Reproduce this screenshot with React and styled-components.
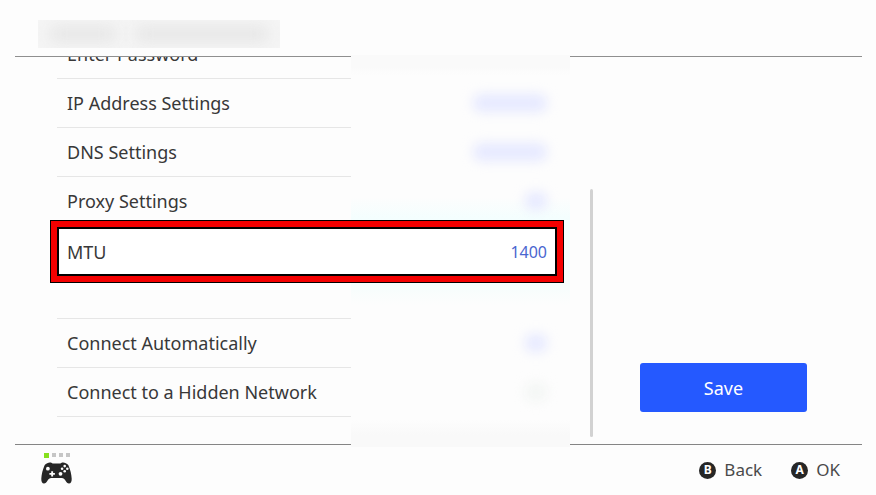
import styled, { createGlobalStyle, css } from "styled-components";

const GlobalStyle = createGlobalStyle`
  * {
    box-sizing: border-box;
  }

  body {
    margin: 0;
    background: #fdfdfd;
    color: #383838;
    font-family: "Noto Sans", "Open Sans", sans-serif;
    font-size: 18px;
    line-height: 24px;
  }

  button {
    border: 0;
    padding: 0;
    background: none;
    color: inherit;
    font: inherit;
    cursor: pointer;
  }
`;

const Page = styled.div`
  display: grid;
  grid-template-rows: 57px 1fr 51px;
  height: 100vh;
  overflow: hidden;
`;

const Header = styled.header`
  margin: 0 14px 0 15px;
  padding: 20px 23px 0;
  border-bottom: 1px solid #8f8f8f;
`;

const HiddenTitle = styled.div`
  display: flex;
  align-items: center;
  gap: 20px;
  width: 242px;
  height: 28px;
  padding: 0 12px;
  background: #f5f5f5;
  overflow: hidden;
`;

const TitleSmudge = styled.span`
  flex: ${(props) => props.$grow};
  height: 14px;
  background: #e4e4e4;
  filter: blur(8px);
`;

const Main = styled.main`
  display: grid;
  grid-template-columns: 1fr 3px 214px;
  padding: 0 69px 0 57px;
  min-height: 0;
`;

const ListColumn = styled.div`
  position: relative;
  margin-right: 33px;
  min-height: 0;
`;

const ListScroll = styled.div`
  display: flex;
  flex-direction: column;
  justify-content: flex-end;
  height: 100%;
  padding-bottom: 27px;
  overflow-x: visible;
  overflow-y: clip;
`;

const List = styled.ul`
  flex: none;
  margin: 0;
  padding: 0;
  list-style: none;

  & + & {
    margin-top: 41px;
    border-top: 1px solid #e6e6e6;
  }
`;

const Row = styled.button`
  display: flex;
  align-items: center;
  justify-content: space-between;
  width: 100%;
  height: 49px;
  padding: 0 10px;
  border-bottom: 1px solid #e6e6e6;
  text-align: left;

  ${(props) =>
    props.$marked &&
    css`
      position: relative;
      z-index: 2;
      height: 51px;
      border-bottom: 0;

      &::before {
        content: "";
        position: absolute;
        inset: -6px -7px;
        z-index: -1;
        border: 1px solid #000;
        background: #fff;
        box-shadow: inset 0 0 0 6px #f40000, inset 0 0 0 8px #000;
      }
    `}
`;

const Value = styled.span`
  color: #4a66d0;
  font-size: 16px;
`;

const HiddenValue = styled.span`
  position: relative;
  z-index: 2;
  width: ${(props) => (props.$wide ? "74px" : "22px")};
  height: 18px;
  border-radius: 8px;
  background: ${(props) => (props.$muted ? "#f3f6f4" : "#e6e9ff")};
  filter: blur(6px);
`;

const Redaction = styled.div`
  position: absolute;
  top: -2px;
  right: -13px;
  bottom: -3px;
  z-index: 1;
  width: 219px;
  background: linear-gradient(
    #fafafa 0 12px,
    #fdfdfd 20px 142px,
    #f3fefe 166px,
    #f6fdfc 230px,
    #fdfdfd 250px 365px,
    #f9f9f9 380px
  );
  pointer-events: none;
`;

const ScrollThumb = styled.div`
  align-self: end;
  height: 64%;
  margin-bottom: 7px;
  border-radius: 2px;
  background: #d2d2d2;
`;

const Side = styled.aside`
  display: flex;
  align-items: flex-end;
  padding: 0 0 32px 47px;
`;

const SaveButton = styled.button`
  width: 100%;
  height: 49px;
  border-radius: 3px;
  background: #2559ff;
  color: #fff;
`;

const Footer = styled.footer`
  display: flex;
  align-items: center;
  justify-content: space-between;
  margin: 0 14px 0 15px;
  padding: 0 22px 0 26px;
  border-top: 1px solid #858585;
`;

const Player = styled.div`
  display: flex;
  flex-direction: column;
  gap: 4px;
  padding-bottom: 4px;
`;

const Lights = styled.div`
  display: flex;
  align-items: center;
  gap: 3px;
  padding-left: 3px;
`;

const Light = styled.span`
  width: ${(props) => (props.$on ? "5px" : "4px")};
  height: ${(props) => (props.$on ? "5px" : "4px")};
  background: ${(props) => (props.$on ? "#86e01e" : "#c6c6c6")};
`;

const Hints = styled.div`
  display: flex;
  gap: 29px;
`;

const Hint = styled.button`
  display: flex;
  align-items: center;
  gap: 8px;
  color: #4a4a4a;
  font-size: 17px;
`;

const Key = styled.span`
  display: grid;
  place-items: center;
  width: 17px;
  height: 17px;
  border-radius: 50%;
  background: #262626;
  color: #fff;
  font-size: 12px;
  font-weight: 700;
  line-height: 16px;
`;

const networkRows = [
  { label: "Enter Password" },
  { label: "IP Address Settings", hidden: true, wide: true },
  { label: "DNS Settings", hidden: true, wide: true },
  { label: "Proxy Settings", hidden: true },
  { label: "MTU", value: "1400", marked: true },
];

const connectRows = [
  { label: "Connect Automatically", hidden: true },
  { label: "Connect to a Hidden Network", hidden: true, muted: true },
];

function Settings({ rows }) {
  return (
    <List>
      {rows.map((row) => (
        <li key={row.label}>
          <Row type="button" $marked={row.marked}>
            <span>{row.label}</span>
            {row.value && <Value>{row.value}</Value>}
            {row.hidden && <HiddenValue $wide={row.wide} $muted={row.muted} />}
          </Row>
        </li>
      ))}
    </List>
  );
}

function Controller() {
  return (
    <svg width="31" height="22" viewBox="0 0 31 22" aria-hidden="true">
      <path
        d="M6.200 1.200C7.600.4 9.600.3 10.800.9c.6.4 1 .6 1.800.6h5.800c.8 0 1.200-.2 1.800-.6 1.200-.6 3.200-.5 4.600.3 1.300.5 2.200 1.100 2.700 2.300 1.800 4 3 9 3.200 13.200.1 2.800-.9 4.800-2.700 4.800-1.500 0-2.500-1.200-3.600-3-.9-1.500-1.900-2.600-3.600-2.600H10.200c-1.700 0-2.700 1.100-3.600 2.600-1.100 1.800-2.100 3-3.600 3-1.800 0-2.800-2-2.700-4.800.2-4.200 1.400-9.200 3.200-13.200.5-1.200 1.400-1.800 2.700-2.300z"
        fill="#262626"
      />
      <g fill="#fdfdfd">
        <circle cx="6.900" cy="6.700" r="1.900" />
        <circle cx="19.500" cy="11.800" r="1.900" />
        <path d="M10.200 9.200h1.900v1.800h1.800v1.800h-1.800v1.800h-1.900v-1.800H8.400V11h1.800z" />
        <circle cx="23.700" cy="4.100" r="1.300" />
        <circle cx="23.700" cy="9.300" r="1.300" />
        <circle cx="21.100" cy="6.700" r="1.300" />
        <circle cx="26.300" cy="6.700" r="1.300" />
      </g>
    </svg>
  );
}

function App() {
  return (
    <>
      <GlobalStyle />
      <Page>
        <Header>
          <HiddenTitle>
            <TitleSmudge $grow={1} />
            <TitleSmudge $grow={2} />
          </HiddenTitle>
        </Header>
        <Main>
          <ListColumn>
            <ListScroll>
              <Settings rows={networkRows} />
              <Settings rows={connectRows} />
            </ListScroll>
            <Redaction />
          </ListColumn>
          <ScrollThumb />
          <Side>
            <SaveButton type="button">Save</SaveButton>
          </Side>
        </Main>
        <Footer>
          <Player>
            <Lights>
              <Light $on />
              <Light />
              <Light />
              <Light />
            </Lights>
            <Controller />
          </Player>
          <Hints>
            <Hint type="button">
              <Key>B</Key>
              Back
            </Hint>
            <Hint type="button">
              <Key>A</Key>
              OK
            </Hint>
          </Hints>
        </Footer>
      </Page>
    </>
  );
}

export default App;
